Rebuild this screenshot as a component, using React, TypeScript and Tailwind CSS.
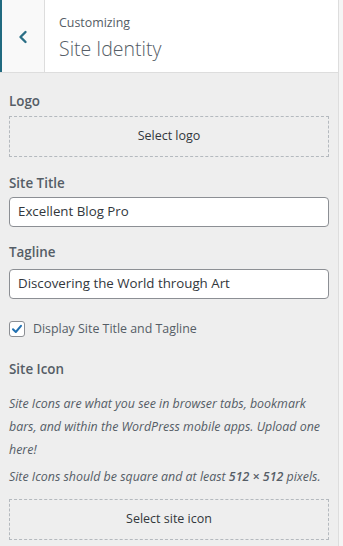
import React from 'react';

const font = { fontFamily: '"Open Sans", "Noto Sans", sans-serif' };

const Label: React.FC<{ children: React.ReactNode }> = ({ children }) => (
    <div className="text-[13.4px] font-semibold text-[#555d66] leading-[20px]">{children}</div>
);

const DashedButton: React.FC<{ label: string }> = ({ label }) => (
    <div className="h-[41px] border border-dashed border-[#b4b9be] flex items-center justify-center text-[12.5px] text-[#32373c]">
        {label}
    </div>
);

const TextField: React.FC<{ value: string }> = ({ value }) => (
    <div className="h-[30px] bg-white border border-[#8c8f94] rounded-[4px] flex items-center px-[8px] text-[13.3px] text-[#32373c]">
        {value}
    </div>
);

export default function App() {
    return (
        <div className="w-[343px] h-[546px] bg-[#f5f5f5] flex overflow-hidden" style={font}>
            <div className="w-[339px] bg-[#eeeeee] border-r border-[#dddddd] flex flex-col">
                <div className="h-[73px] shrink-0 bg-white border-b border-[#dddddd] flex">
                    <div className="w-[45px] bg-[#f9f9f9] border-l-[2px] border-[#216a80] border-r border-r-[#dddddd] flex items-center justify-center">
                        <svg width="12" height="14" viewBox="0 0 12 14" className="mt-[2px]">
                            <path d="M8.5 2 L3.5 7 L8.5 12" fill="none" stroke="#2b6f86" strokeWidth="2.4" strokeLinecap="round" strokeLinejoin="round" />
                        </svg>
                    </div>
                    <div className="flex flex-col pl-[14px] pt-[14px]">
                        <span className="text-[12.4px] text-[#555d66] leading-[18px]">Customizing</span>
                        <span className="text-[19.5px] font-light text-[#555d66] leading-[28px] mt-[3px]">Site Identity</span>
                    </div>
                </div>
                <div className="flex flex-col px-[9px] pt-[18px]">
                    <Label>Logo</Label>
                    <div className="mt-[5px]">
                        <DashedButton label="Select logo" />
                    </div>
                    <div className="mt-[16px]">
                        <Label>Site Title</Label>
                    </div>
                    <div className="mt-[4px]">
                        <TextField value="Excellent Blog Pro" />
                    </div>
                    <div className="mt-[15px]">
                        <Label>Tagline</Label>
                    </div>
                    <div className="mt-[7px]">
                        <TextField value="Discovering the World through Art" />
                    </div>
                    <div className="mt-[21px] flex items-center gap-[8px]">
                        <div className="w-[16px] h-[16px] bg-white border border-[#8c8f94] rounded-[3px] flex items-center justify-center">
                            <svg width="12" height="12" viewBox="0 0 12 12">
                                <path d="M2 6.2 L4.8 9 L10 2.8" fill="none" stroke="#2271b1" strokeWidth="2" strokeLinecap="round" strokeLinejoin="round" />
                            </svg>
                        </div>
                        <span className="text-[12.4px] text-[#555d66]">Display Site Title and Tagline</span>
                    </div>
                    <div className="mt-[20px]">
                        <Label>Site Icon</Label>
                    </div>
                    <p className="mt-[13px] text-[12.4px] italic text-[#555d66] leading-[23px]">
                        Site Icons are what you see in browser tabs, bookmark bars, and within the WordPress mobile apps. Upload one here!
                    </p>
                    <p className="mt-[4px] text-[12.4px] italic text-[#555d66] leading-[23px]">
                        Site Icons should be square and at least <strong className="font-semibold">512 × 512</strong> pixels.
                    </p>
                    <div className="mt-[11px]">
                        <DashedButton label="Select site icon" />
                    </div>
                </div>
            </div>
        </div>
    );
}
